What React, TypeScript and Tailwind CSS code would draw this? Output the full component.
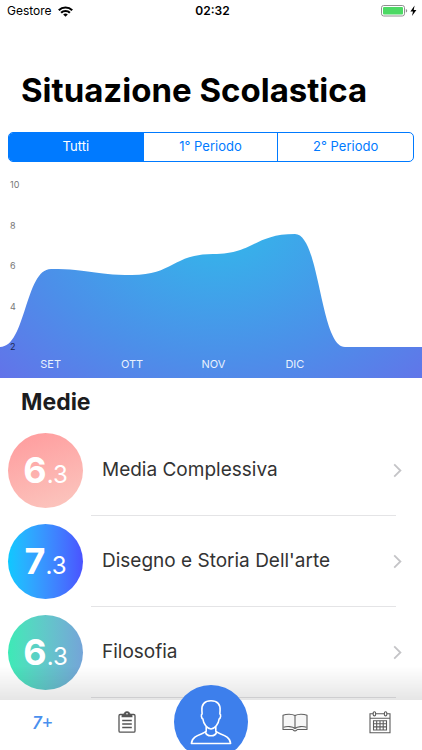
import type { ReactNode } from "react";

type Grade = { subject: string; whole: string; decimal: string; fill: string };

const grades: Grade[] = [
  { subject: "Media Complessiva", whole: "6", decimal: ".3", fill: "bg-linear-[160deg] from-[#ff9a9c] to-[#fbc8c0]" },
  { subject: "Disegno e Storia Dell'arte", whole: "7", decimal: ".3", fill: "bg-linear-to-r from-[#0cc8ff] to-[#4a52ff]" },
  { subject: "Filosofia", whole: "6", decimal: ".3", fill: "bg-linear-to-r from-[#3ceab6] to-[#74a4d8]" },
];

const periods = ["Tutti", "1° Periodo", "2° Periodo"];
const ticks = ["10", "8", "6", "4", "2"];
const months = ["SET", "OTT", "NOV", "DIC"];

function StatusBar() {
  return (
    <div className="grid h-[22px] grid-cols-3 items-center pl-[7px] pr-1 text-[12px] leading-[22px]">
      <div className="flex items-center gap-[6px]">
        <span>Gestore</span>
        <svg width="15" height="11" viewBox="0 0 15 11" fill="none" stroke="#000" strokeWidth="2.2">
          <path d="M0.8 4.2a9.6 9.6 0 0 1 13.4 0" />
          <path d="M3.1 6.8a6.3 6.3 0 0 1 8.8 0" />
          <path d="M7.5 10.8 5.2 8.6a3.3 3.3 0 0 1 4.6 0z" fill="#000" stroke="none" />
        </svg>
      </div>
      <span className="text-center font-semibold">02:32</span>
      <svg className="justify-self-end" width="37" height="12" viewBox="0 0 37 12">
        <rect x="0.5" y="0.5" width="23" height="10.5" rx="2.2" fill="#fff" stroke="#8f8f8f" />
        <rect x="2" y="2" width="20" height="7.5" rx="1" fill="#4cd964" />
        <path d="M24.8 4v3.5a1.8 1.8 0 0 0 0-3.5" fill="#8f8f8f" />
        <path d="M33.6 0.6 29.4 6.4h2.6l-1 4.6 4.4-6h-2.7z" fill="#000" />
      </svg>
    </div>
  );
}

function Chart() {
  return (
    <figure className="relative mt-[14px] flex h-[202px] flex-col justify-between">
      <svg
        className="absolute inset-0 h-full w-full"
        viewBox="0 0 422 202"
        preserveAspectRatio="none"
        aria-hidden="true"
      >
        <defs>
          <radialGradient
            id="area"
            gradientUnits="userSpaceOnUse"
            cx="0"
            cy="0"
            r="1"
            gradientTransform="translate(218 45) scale(315 230)"
          >
            <stop offset="0" stopColor="#36b4ea" />
            <stop offset="0.15" stopColor="#38afea" />
            <stop offset="0.6" stopColor="#4c8fe9" />
            <stop offset="1" stopColor="#6471e9" />
          </radialGradient>
        </defs>
        <path
          d="M0 171C26 171 25 93 51 93C92 93 91 99 132 99C173 99 173 78 213 78C254 78 254 58 295 58C320 58 320 171 345 171H422V202H0Z"
          fill="url(#area)"
        />
      </svg>
      <ul className="relative flex h-[180px] flex-col justify-between pl-[10px] text-[9px] leading-[18px] text-[#777]">
        {ticks.map((tick) => (
          <li key={tick} className="last:text-[#1d2550]">
            {tick}
          </li>
        ))}
      </ul>
      <ul className="relative grid grid-cols-5 pb-[6px] pl-[10px] pr-[5px] text-center text-[11px] leading-[16px] text-[#e9f1fd]">
        {months.map((month) => (
          <li key={month}>{month}</li>
        ))}
      </ul>
    </figure>
  );
}

function Chevron() {
  return (
    <svg width="9" height="15" viewBox="0 0 9 15" fill="none" stroke="#c4c4c7" strokeWidth="1.8">
      <path d="M1.2 1.4 7.4 7.5 1.2 13.6" />
    </svg>
  );
}

function GradeRow({ subject, whole, decimal, fill }: Grade) {
  return (
    <li>
      <a href="#materia" className="flex h-[91px] items-stretch pl-2">
        <span className={`my-2 flex size-[75px] items-baseline justify-center rounded-full text-white ${fill}`}>
          <span className="text-[36px] leading-[75px] font-bold">{whole}</span>
          <span className="text-[24px] leading-[75px]">{decimal}</span>
        </span>
        <span className="mr-[26px] ml-2 flex flex-1 items-center border-b border-[#e4e4e6] pl-[11px] text-[19px] text-[#333]">
          <span className="flex-1">{subject}</span>
          <span className="-mr-[6px]">
            <Chevron />
          </span>
        </span>
      </a>
    </li>
  );
}

function ClipboardIcon() {
  return (
    <svg width="18" height="22" viewBox="0 0 18 22" fill="none" stroke="#555" strokeWidth="1.3">
      <rect x="1" y="3.5" width="16" height="17.7" rx="1.2" />
      <path d="M4.2 5.6C4.2 3.6 5 3.4 6.6 3.2a2.4 2.4 0 0 1 4.8 0c1.6.2 2.4.4 2.4 2.4z" fill="#555" />
      <circle cx="9" cy="2.8" r="0.8" fill="#fff" stroke="none" />
      <path d="M4.2 9.4h9.6M4.2 13h9.6M4.2 16.6h9.6" strokeWidth="1.5" />
    </svg>
  );
}

function BookIcon() {
  return (
    <svg width="26" height="19" viewBox="0 0 26 19" fill="#f6f6f6" stroke="#606060" strokeWidth="1.1" strokeLinejoin="round">
      <path d="M13 2.5C10 0.8 4.5 0.8 1 2.2v14.3h9.5c.8 0 1 1.4 2.5 1.4s1.7-1.4 2.5-1.4H25V2.2C21.5.8 16 .8 13 2.5z" />
      <path d="M13 2.5V15.5M1.5 14.3c3.5-1.3 9-1 11.5 1.2 2.5-2.2 8-2.5 11.5-1.2" fill="none" />
    </svg>
  );
}

function CalendarIcon() {
  return (
    <svg width="22" height="23" viewBox="0 0 22 23" fill="none" stroke="#5c5c5c" strokeWidth="1.1">
      <path d="M4.2 2.7H1v19h20v-19h-3.2M6.8 2.7h8.4M1 7.2h20" />
      <rect x="4.2" y="0.7" width="2.4" height="4.2" rx="1.2" />
      <rect x="15.4" y="0.7" width="2.4" height="4.2" rx="1.2" />
      <path d="M4.5 9.7h13v9.3h-13zM4.5 12.8h13M4.5 15.9h13M7.7 9.7v9.3M11 9.7v9.3M14.2 9.7v9.3" />
    </svg>
  );
}

function PersonIcon() {
  return (
    <svg width="44" height="46" viewBox="0 0 44 46" fill="none" stroke="#fff" strokeWidth="1.6" strokeLinejoin="round">
      <path d="M22 1.8C15.5 1.8 12.5 5.5 12.9 11.5c.1 1.6.2 2.5.2 3.5-1.2.4-.9 4.3.8 5 .5 4.800 4.300 10 8.100 10s7.600-5.200 8.100-10c1.700-.7 2-4.600.8-5 0-1 .1-1.900.2-3.500C31.500 5.500 28.500 1.800 22 1.800z" />
      <path d="M17.2 27.500v4.800C14.500 35.500 3 35.500 2.400 44.500h39.200C41 35.500 29.500 35.500 26.800 32.300v-4.800" />
      <path d="M16.5 33c.8 5 10.200 5 11 0" />
    </svg>
  );
}

function Tab({ label, children }: { label: string; children: ReactNode }) {
  return (
    <button type="button" aria-label={label} className="flex h-[44px] items-center justify-center">
      {children}
    </button>
  );
}

function TabBar() {
  return (
    <nav className="fixed inset-x-0 bottom-0">
      <div className="h-[34px] bg-linear-to-t from-black/10 to-black/0" />
      <div className="grid h-[50px] grid-cols-5 bg-white">
        <Tab label="Voti">
          <span className="font-['Open_Sans',sans-serif] text-[18px] font-semibold text-[#4a90ee] italic">7+</span>
        </Tab>
        <Tab label="Compiti">
          <ClipboardIcon />
        </Tab>
        <div className="flex justify-center">
          <button
            type="button"
            aria-label="Profilo"
            className="-mt-[15px] flex size-[74px] shrink-0 items-center justify-center rounded-full bg-[#3d7fec]"
          >
            <PersonIcon />
          </button>
        </div>
        <Tab label="Libri">
          <BookIcon />
        </Tab>
        <Tab label="Calendario">
          <CalendarIcon />
        </Tab>
      </div>
    </nav>
  );
}

export default function App() {
  return (
    <div className="h-screen overflow-hidden bg-white font-[Inter,sans-serif] text-black">
      <StatusBar />
      <h1 className="mt-[46px] px-[21px] text-[33px] leading-[44px] font-bold">Situazione Scolastica</h1>
      <div className="mx-2 mt-[20px] grid h-[30px] grid-cols-3 divide-x divide-[#007aff] overflow-hidden rounded-[5px] border border-[#007aff] text-[13px]">
        {periods.map((period, index) => (
          <button key={period} type="button" className={index === 0 ? "bg-[#007aff] text-white" : "text-[#007aff]"}>
            {period}
          </button>
        ))}
      </div>
      <Chart />
      <h2 className="px-[21px] pt-2 text-[23px] leading-[32px] font-bold text-[#1c1c1e]">Medie</h2>
      <ul className="mt-[7px]">
        {grades.map((grade) => (
          <GradeRow key={grade.subject} {...grade} />
        ))}
      </ul>
      <TabBar />
    </div>
  );
}
